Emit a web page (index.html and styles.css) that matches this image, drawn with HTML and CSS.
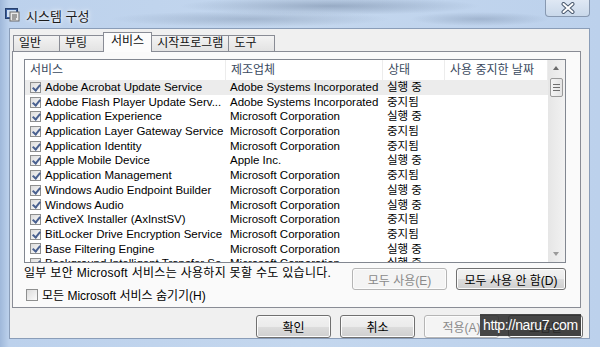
FILE: index.html
```html
<!DOCTYPE html>
<html lang="ko">

<head>
    <meta charset="UTF-8">
    <title>시스템 구성</title>
    <link rel="stylesheet" href="styles.css">
</head>

<body>
    <div class="window">
        <div class="titlebar">
            <svg class="app-icon" width="15" height="14" viewBox="0 0 15 14">
                <rect x="0.5" y="0.5" width="12" height="10" fill="#3b5f9e" stroke="#27406d" />
                <rect x="2" y="2" width="9" height="7" fill="#cfe0f5" />
                <rect x="5" y="4" width="9" height="9" fill="#e9e9e9" stroke="#6b6b6b" />
                <path d="M7 7h5M7 9h5M7 11h4" stroke="#555" stroke-width="1" />
            </svg>
            <span class="title">시스템 구성</span>
            <div class="close-btn">
                <svg width="14" height="12" viewBox="0 0 14 12">
                    <path d="M2.5 2 L11.5 10 M11.5 2 L2.5 10" stroke="#4b5a6f" stroke-width="4" stroke-linecap="round" />
                    <path d="M2.5 2 L11.5 10 M11.5 2 L2.5 10" stroke="#fff" stroke-width="2" stroke-linecap="round" />
                </svg>
            </div>
        </div>

        <div class="client">
            <div class="tabs">
                <div class="tab">일반</div>
                <div class="tab">부팅</div>
                <div class="tab active">서비스</div>
                <div class="tab">시작프로그램</div>
                <div class="tab">도구</div>
            </div>

            <div class="panel">
                <div class="list">
                    <div class="list-body">
                        <div class="row head">
                            <div>서비스</div>
                            <div>제조업체</div>
                            <div>상태</div>
                            <div>사용 중지한 날짜</div>
                        </div>
                        <div class="row selected">
                            <div><span class="check on"></span>Adobe Acrobat Update Service</div>
                            <div>Adobe Systems Incorporated</div>
                            <div>실행 중</div>
                            <div></div>
                        </div>
                        <div class="row">
                            <div><span class="check on"></span>Adobe Flash Player Update Serv...</div>
                            <div>Adobe Systems Incorporated</div>
                            <div>중지됨</div>
                            <div></div>
                        </div>
                        <div class="row">
                            <div><span class="check on"></span>Application Experience</div>
                            <div>Microsoft Corporation</div>
                            <div>실행 중</div>
                            <div></div>
                        </div>
                        <div class="row">
                            <div><span class="check on"></span>Application Layer Gateway Service</div>
                            <div>Microsoft Corporation</div>
                            <div>중지됨</div>
                            <div></div>
                        </div>
                        <div class="row">
                            <div><span class="check on"></span>Application Identity</div>
                            <div>Microsoft Corporation</div>
                            <div>중지됨</div>
                            <div></div>
                        </div>
                        <div class="row">
                            <div><span class="check on"></span>Apple Mobile Device</div>
                            <div>Apple Inc.</div>
                            <div>실행 중</div>
                            <div></div>
                        </div>
                        <div class="row">
                            <div><span class="check on"></span>Application Management</div>
                            <div>Microsoft Corporation</div>
                            <div>중지됨</div>
                            <div></div>
                        </div>
                        <div class="row">
                            <div><span class="check on"></span>Windows Audio Endpoint Builder</div>
                            <div>Microsoft Corporation</div>
                            <div>실행 중</div>
                            <div></div>
                        </div>
                        <div class="row">
                            <div><span class="check on"></span>Windows Audio</div>
                            <div>Microsoft Corporation</div>
                            <div>실행 중</div>
                            <div></div>
                        </div>
                        <div class="row">
                            <div><span class="check on"></span>ActiveX Installer (AxInstSV)</div>
                            <div>Microsoft Corporation</div>
                            <div>중지됨</div>
                            <div></div>
                        </div>
                        <div class="row">
                            <div><span class="check on"></span>BitLocker Drive Encryption Service</div>
                            <div>Microsoft Corporation</div>
                            <div>중지됨</div>
                            <div></div>
                        </div>
                        <div class="row">
                            <div><span class="check on"></span>Base Filtering Engine</div>
                            <div>Microsoft Corporation</div>
                            <div>실행 중</div>
                            <div></div>
                        </div>
                        <div class="row">
                            <div><span class="check on"></span>Background Intelligent Transfer Se...</div>
                            <div>Microsoft Corporation</div>
                            <div>실행 중</div>
                            <div></div>
                        </div>
                    </div>
                    <div class="scrollbar">
                        <div class="arrow up"></div>
                        <div class="thumb"><i></i><i></i><i></i></div>
                        <div class="track"></div>
                        <div class="arrow down"></div>
                    </div>
                </div>

                <div class="options">
                    <div class="options-left">
                        <div class="note">일부 보안 Microsoft 서비스는 사용하지 못할 수도 있습니다.</div>
                        <label class="hide-ms"><span class="check"></span>모든 Microsoft 서비스 숨기기(H)</label>
                    </div>
                    <button class="btn wide" disabled>모두 사용(E)</button>
                    <button class="btn wider">모두 사용 안 함(D)</button>
                </div>
            </div>

            <div class="actions">
                <button class="btn">확인</button>
                <button class="btn">취소</button>
                <button class="btn" disabled>적용(A)</button>
                <button class="btn">도움말</button>
            </div>
        </div>

        <div class="watermark">http://naru7.com</div>
    </div>
</body>

</html>
```

FILE: styles.css
```css
html,
body {
    margin: 0;
    padding: 0;
}

body {
    width: 600px;
    height: 347px;
    overflow: hidden;
    font-family: "Liberation Sans", "Noto Sans CJK KR", sans-serif;
    font-size: 12px;
    color: #000;
}

.window {
    position: relative;
    width: 600px;
    height: 347px;
    box-sizing: border-box;
    padding: 0 10px 8px 9px;
    display: flex;
    flex-direction: column;
    background:
        radial-gradient(ellipse 150px 9px at 330px 6px, rgba(70, 90, 120, 0.35), transparent),
        radial-gradient(ellipse 140px 8px at 250px 19px, rgba(70, 90, 120, 0.25), transparent),
        radial-gradient(ellipse 70px 7px at 480px 19px, rgba(70, 90, 120, 0.25), transparent),
        linear-gradient(to right, #9fb8da, #bcd1ec 9px, #c4d7ee 50%, #bcd1ec);
}

/* title bar */

.titlebar {
    height: 28px;
    margin: 0 -10px 0 -9px;
    padding-left: 5px;
    display: flex;
    align-items: center;
    flex-shrink: 0;
}

.app-icon {
    margin-top: 2px;
}

.title {
    margin-left: 6px;
    margin-top: 2px;
    font-size: 13px;
    color: #1b1b1b;
    text-shadow: 0 0 6px #fff, 0 0 3px #fff;
}

.close-btn {
    align-self: flex-start;
    margin-left: auto;
    margin-right: 10px;
    width: 45px;
    height: 17px;
    box-sizing: border-box;
    border: 1px solid #8798b0;
    border-top: none;
    border-radius: 0 0 4px 4px;
    background: linear-gradient(#dfe8f4, #c9d8ea);
    display: flex;
    align-items: center;
    justify-content: center;
}

/* client area */

.client {
    flex: 1;
    background: #f0f0f0;
    border: 1px solid #8a9db8;
    display: flex;
    flex-direction: column;
}

.tabs {
    display: flex;
    align-items: flex-end;
    height: 22px;
    padding-left: 3px;
}

.tab {
    min-width: 47px;
    height: 16px;
    box-sizing: border-box;
    padding: 0 5px;
    margin-right: -1px;
    border: 1px solid #898c95;
    border-bottom: none;
    background: linear-gradient(#f3f3f3, #e3e3e3);
    line-height: 15px;
    color: #111;
    white-space: nowrap;
}

.tab.active {
    position: relative;
    z-index: 1;
    height: 20px;
    margin: 0 -1px -1px -2px;
    padding: 0 7px;
    background: #fcfcfc;
    line-height: 17px;
}

.panel {
    margin: 0 8px 0 2px;
    padding: 7px 14px 6px 11px;
    border: 1px solid #898c95;
    background: #fafafa;
}

/* list view */

.list {
    display: flex;
    height: 204px;
    box-sizing: border-box;
    border: 1px solid #828790;
    background: #fff;
}

.list-body {
    flex: 1;
    overflow: hidden;
}

.row {
    display: grid;
    grid-template-columns: 201px 157px 62px 1fr;
    height: 14.7px;
    line-height: 14.7px;
    font-size: 11.5px;
    white-space: nowrap;
}

.row > div {
    padding-left: 4px;
    overflow: hidden;
    display: flex;
    align-items: center;
}

.row.head {
    height: 20px;
    line-height: 20px;
    font-size: 12px;
    color: #3a4a5e;
}

.row.head > div {
    padding-left: 5px;
    border-right: 1px solid #ececec;
}

.row.selected {
    background: #ececec;
}

.check {
    position: relative;
    display: inline-block;
    width: 11px;
    height: 11px;
    box-sizing: border-box;
    margin: 0 4px 0 1px;
    border: 1px solid #8e8f8f;
    background: linear-gradient(135deg, #dcdcdc, #fbfbfb);
    flex-shrink: 0;
}

.check.on::after {
    content: "";
    position: absolute;
    left: 3px;
    top: 0;
    width: 3px;
    height: 6px;
    border-right: 2px solid #4a6190;
    border-bottom: 2px solid #4a6190;
    transform: rotate(40deg);
}

.scrollbar {
    width: 17px;
    display: flex;
    flex-direction: column;
    align-items: center;
    background: linear-gradient(to right, #e6e6e6, #f2f2f2);
}

.arrow {
    height: 16px;
    width: 17px;
    position: relative;
}

.arrow::after {
    content: "";
    position: absolute;
    left: 5px;
    border-left: 3.5px solid transparent;
    border-right: 3.5px solid transparent;
}

.arrow.up::after {
    top: 6px;
    border-bottom: 4px solid #6a6a6a;
}

.arrow.down::after {
    top: 6px;
    border-top: 4px solid #9a9a9a;
}

.thumb {
    width: 13px;
    height: 19px;
    margin-top: 2px;
    box-sizing: border-box;
    border: 1px solid #9a9a9a;
    border-radius: 2px;
    background: linear-gradient(to right, #f4f4f4, #e4e4e4);
    display: flex;
    flex-direction: column;
    align-items: center;
    justify-content: center;
    gap: 2px;
}

.thumb i {
    display: block;
    width: 7px;
    height: 1px;
    background: #6f6f6f;
}

.track {
    flex: 1;
}

/* options under the list */

.options {
    display: flex;
    align-items: flex-start;
    gap: 9px;
}

.options-left {
    flex: 1;
    display: flex;
    flex-direction: column;
}

.note {
    margin-top: 3px;
    line-height: 14px;
    letter-spacing: 0.3px;
    white-space: nowrap;
}

.hide-ms {
    margin-top: 8px;
    height: 13px;
    display: flex;
    align-items: center;
    white-space: nowrap;
}

.hide-ms .check {
    width: 12px;
    height: 12px;
    margin: 0 4px 0 2px;
}

/* buttons */

.btn {
    width: 75px;
    height: 23px;
    padding: 0;
    font-family: "Liberation Sans", "Noto Sans CJK KR", sans-serif;
    font-size: 12px;
    color: #000;
    border: 1px solid #707070;
    border-radius: 3px;
    box-shadow: inset 0 0 0 1px #fcfcfc;
    background: linear-gradient(#f2f2f2, #ebebeb 50%, #dddddd 51%, #cfcfcf);
}

.btn:disabled {
    color: #8a8a8a;
    border-color: #b5b5b5;
    background: #f4f4f4;
}

.options .btn {
    margin-top: 5px;
    height: 22px;
}

.btn.wide {
    width: 95px;
}

.btn.wider {
    width: 110px;
}

.actions {
    display: flex;
    justify-content: flex-end;
    gap: 9px;
    margin-top: 7px;
    padding-right: 6px;
}

/* watermark over the dialog */

.watermark {
    position: absolute;
    left: 480px;
    top: 314px;
    height: 22px;
    padding: 0 3px;
    background: rgba(45, 45, 45, 0.88);
    color: #fff;
    font-family: "Liberation Sans", sans-serif;
    font-size: 14px;
    line-height: 22px;
    letter-spacing: -0.4px;
}
```
